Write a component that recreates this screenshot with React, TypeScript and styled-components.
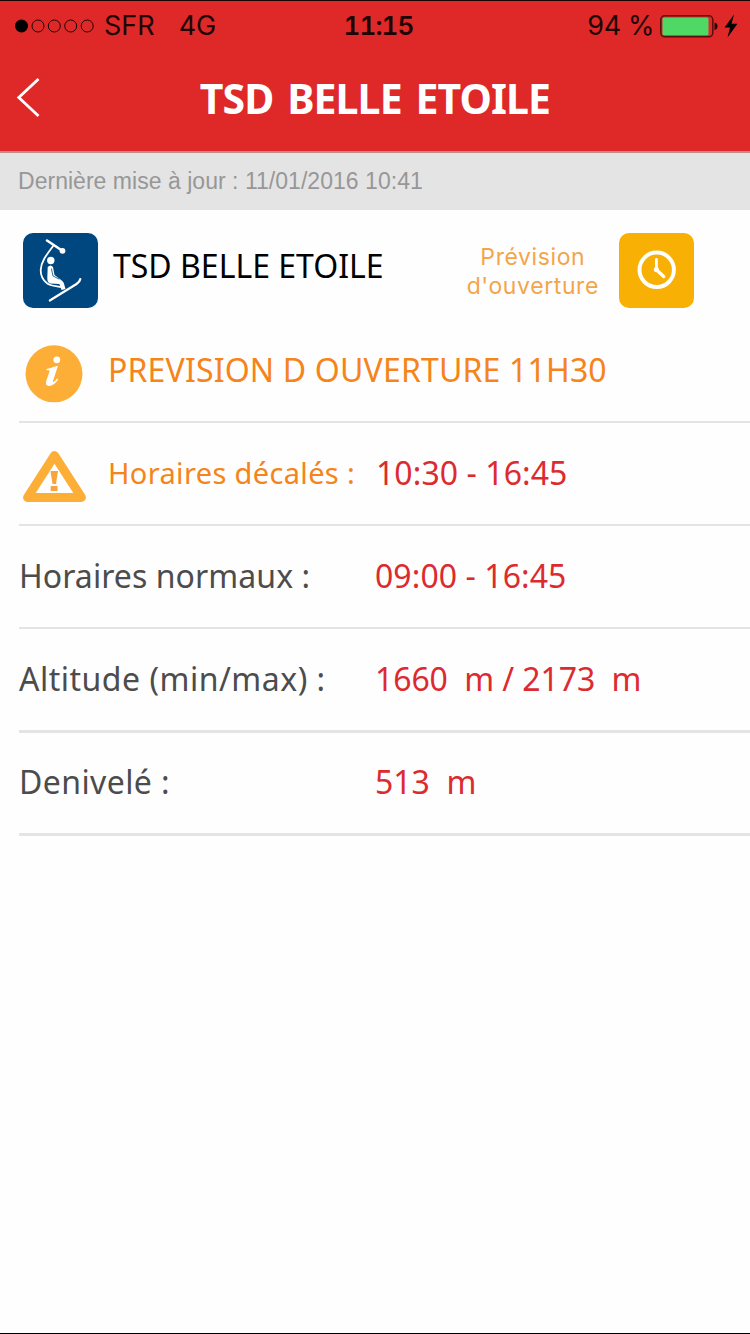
import React from "react";
import styled, { createGlobalStyle } from "styled-components";

const GlobalStyle = createGlobalStyle`
  * { box-sizing: border-box; }
  html, body { margin: 0; padding: 0; background: #fff; }
  svg { display: block; flex: none; }
`;

const frutiger = `"Noto Sans", "Open Sans", sans-serif`;
const system = `Inter, sans-serif`;

const Screen = styled.main`
  width: 750px;
  height: 1334px;
  display: flex;
  flex-direction: column;
  overflow: hidden;
  background: #fefefe;
  border-top: 1px solid #1a0303;
  border-bottom: 1px solid #000;
  font-family: ${frutiger};
`;

const Label = styled.span<{ $size: number; $spacing?: number; $color?: string; $weight?: number; $font?: string }>`
  font-family: ${(p) => p.$font ?? frutiger};
  font-size: ${(p) => p.$size}px;
  letter-spacing: ${(p) => p.$spacing ?? 0}px;
  color: ${(p) => p.$color ?? "inherit"};
  font-weight: ${(p) => p.$weight ?? 400};
  line-height: 1;
  white-space: pre;
`;

const Header = styled.header`
  height: 152px;
  flex: none;
  background: #df2929;
  border-bottom: 2px solid #bf8c8c;
`;

const StatusBar = styled.div`
  height: 48px;
  display: grid;
  grid-template-columns: 1fr auto 1fr;
  align-items: center;
  padding: 1px 10px 0 14px;
  color: #200404;
`;

const StatusGroup = styled.div<{ $end?: boolean }>`
  display: flex;
  align-items: center;
  justify-content: ${(p) => (p.$end ? "flex-end" : "flex-start")};
`;

const Signal = styled.svg`
  margin-right: 9px;
`;

const Network = styled.div`
  margin-left: 24px;
  display: flex;
`;

const Clock = styled(Label)`
  padding-left: 3px;
  font-variant-numeric: tabular-nums;
`;

const Battery = styled.svg`
  margin-left: 6px;
`;

const NavBar = styled.div`
  height: 102px;
  display: grid;
  grid-template-columns: 60px 1fr 60px;
  align-items: center;
  justify-items: center;
  padding-bottom: 5px;
  color: #fff;
`;

const BackButton = styled.button`
  width: 60px;
  height: 60px;
  padding: 3px 0 0 16px;
  margin-bottom: 3px;
  border: 0;
  background: none;
  color: inherit;
`;

const Title = styled(Label)`
  padding-top: 1px;
  word-spacing: 4px;
`;

const UpdateBar = styled.div`
  height: 57px;
  flex: none;
  display: flex;
  align-items: center;
  padding-left: 18px;
  background: #e4e4e4;
`;

const Summary = styled.section`
  height: 108px;
  flex: none;
  display: flex;
  align-items: center;
  padding: 13px 56px 0 23px;
`;

const LiftName = styled.h2`
  flex: 1;
  margin: 0 0 9px 15px;
  display: flex;
`;

const Forecast = styled.div`
  display: flex;
  flex-direction: column;
  align-items: center;
  gap: 6px;
  margin-right: 20px;
  padding-top: 3px;
`;

const Tile = styled.div<{ $color: string }>`
  width: 75px;
  height: 75px;
  border-radius: 10px;
  background: ${(p) => p.$color};
`;

const Details = styled.section`
  padding-left: 19px;
`;

const Row = styled.div<{ $height: number; $line?: number; $lift?: number }>`
  height: ${(p) => p.$height}px;
  display: flex;
  align-items: center;
  padding-bottom: ${(p) => p.$lift ?? 0}px;
  border-bottom: ${(p) => p.$line ?? 2}px solid #e4e4e4;
`;

const IconSlot = styled.div`
  width: 89px;
  flex: none;
  padding-top: 8px;
`;

const Cell = styled.div<{ $width: number }>`
  display: flex;
  flex: none;
  width: ${(p) => p.$width}px;
`;

const ORANGE = "#f5841a";
const RED = "#dc2b2f";
const GREY = "#4c4c4c";

const ChairliftIcon = () => (
  <svg width="75" height="75" viewBox="0 0 75 75" fill="none" stroke="#fff" strokeLinecap="round">
    <path d="M24 7.5 L39 17.5" strokeWidth="2.6" />
    <circle cx="39.5" cy="17.8" r="2.9" fill="#fff" stroke="none" />
    <path d="M30.5 12.5 C25 20 18 28 17.7 37 C17.6 43 20 47 23.5 49.8 C27 53 34 53 38 54" strokeWidth="1.8" />
    <circle cx="27.8" cy="27.5" r="3.7" fill="#fff" stroke="none" />
    <path d="M24.7 34 Q27.5 31 30 34 L31.5 42 L37.5 46.5 Q40 48 40.8 50 L42.5 56 L38.5 57 L36.3 51 L27 50.5 Q24.2 49.5 24.3 45 Z" fill="#fff" stroke="none" />
    <path d="M28.5 36 L30 43 L36 46" stroke="#00467f" strokeWidth=".8" />
    <path d="M26.8 67.5 L53.5 51 Q57 48.5 57.3 46" strokeWidth="2.2" />
  </svg>
);

const ClockIcon = () => (
  <svg width="75" height="75" viewBox="0 0 75 75" fill="none" stroke="#fff" strokeLinecap="round">
    <circle cx="37.7" cy="36.8" r="17.2" strokeWidth="4" />
    <path d="M37.4 26.5 V37" strokeWidth="2.8" />
    <path d="M37.6 37 L44.7 43.5" strokeWidth="3.4" />
    <circle cx="37.3" cy="36.5" r="2.5" fill="#fff" stroke="none" />
  </svg>
);

const InfoIcon = () => (
  <svg width="70" height="58" viewBox="0 0 70 58">
    <circle cx="35" cy="28.8" r="28.5" fill="#fdae36" />
    <circle cx="37.8" cy="14.8" r="3.4" fill="#fff" />
    <path
      d="M27.5 23.9 Q32 23.1 37.5 20.9 L38.9 21.1 L34 36.1 Q33.7 37.8 35.2 36.6 Q36.8 35.4 38 33.6 L39.2 34.5 Q34.7 41.1 30 41 Q25.9 40.8 27.2 36.3 L30.5 26.3 Q30.8 25.2 29.7 25.2 L27.5 25.3 Z"
      fill="#fff"
    />
  </svg>
);

const WarningIcon = () => (
  <svg width="70" height="54" viewBox="0 0 70 54">
    <path d="M35.5 5.5 L8.5 47.5 H62.5 Z" fill="none" stroke="#fdae36" strokeWidth="8.8" strokeLinejoin="round" />
    <path d="M31.5 21 H39 L37 34 H33.5 Z" fill="#f9a33c" />
    <rect x="31.7" y="36" width="6.8" height="5" fill="#f9a33c" />
  </svg>
);

const rows = [
  { label: "Horaires normaux :", spacing: 0.07, value: "09:00 - 16:45", valueSpacing: 0.07, height: 103, line: 2 },
  { label: "Altitude (min/max) :", spacing: 0.5, value: "1660  m / 2173  m", valueSpacing: -0.1, height: 104, line: 3 },
  { label: "Denivelé :", spacing: 0.4, value: "513  m", valueSpacing: 0, height: 103, line: 3 },
];

export default function App() {
  return (
    <Screen>
      <GlobalStyle />
      <Header>
        <StatusBar>
          <StatusGroup>
            <Signal width="81" height="14" viewBox="0 0 81 14" fill="none" stroke="currentColor">
              <circle cx="7.5" cy="7" r="6.5" fill="#000" stroke="none" />
              {[24, 40.3, 56.7, 73.2].map((x) => (
                <circle key={x} cx={x} cy="7" r="6" strokeWidth="1" />
              ))}
            </Signal>
            <Label $size={27} $font={system}>SFR</Label>
            <Network>
              <Label $size={27} $font={system}>4G</Label>
            </Network>
          </StatusGroup>
          <Clock $size={26} $weight={600} $font={system} $spacing={-0.9}>11:15</Clock>
          <StatusGroup $end>
            <Label $size={27} $font={system} $spacing={-0.4}>94 %</Label>
            <Battery width="80" height="26" viewBox="0 0 80 26">
              <rect x="0.8" y="2.8" width="52" height="21" rx="4" fill="none" stroke="#5a0d0d" strokeWidth="1.5" />
              <rect x="2.5" y="4.5" width="46" height="17.8" rx="1.5" fill="#4fd964" />
              <path d="M54.5 9.5 Q57.5 10 57.5 13.3 Q57.5 16.6 54.5 17 Z" fill="#200404" />
              <path d="M74 1.5 L64.5 14.5 H70 L67.5 24.5 L77.5 10.8 H71.5 Z" fill="#000" />
            </Battery>
          </StatusGroup>
        </StatusBar>
        <NavBar>
          <BackButton aria-label="Retour">
            <svg width="24" height="40" viewBox="0 0 24 40" fill="none" stroke="currentColor" strokeWidth="2.8">
              <path d="M22.5 1 L2.8 19.5 L22.5 38" />
            </svg>
          </BackButton>
          <Title $size={41} $weight={700} $spacing={-0.9}>TSD BELLE ETOILE</Title>
        </NavBar>
      </Header>
      <UpdateBar>
        <Label $size={23} $color="#979797" $spacing={0.03} $font={`"Liberation Sans", Arial, sans-serif`}>
          Dernière mise à jour : 11/01/2016 10:41
        </Label>
      </UpdateBar>
      <Summary>
        <Tile $color="#00467f">
          <ChairliftIcon />
        </Tile>
        <LiftName>
          <Label $size={32} $color="#000">TSD BELLE ETOILE</Label>
        </LiftName>
        <Forecast>
          <Label $size={23} $color="#f4a549" $font={system} $spacing={0.6}>Prévision</Label>
          <Label $size={23} $color="#f4a549" $font={system} $spacing={0.6}>d'ouverture</Label>
        </Forecast>
        <Tile $color="#f9b004">
          <ClockIcon />
        </Tile>
      </Summary>
      <Details>
        <Row $height={105}>
          <IconSlot>
            <InfoIcon />
          </IconSlot>
          <Label $size={32} $spacing={0.17} $color={ORANGE}>PREVISION D OUVERTURE 11H30</Label>
        </Row>
        <Row $height={103} $lift={2}>
          <IconSlot>
            <WarningIcon />
          </IconSlot>
          <Cell $width={268}>
            <Label $size={29} $spacing={0.35} $color={ORANGE}>Horaires décalés :</Label>
          </Cell>
          <Label $size={32} $spacing={0.07} $color={RED}>10:30 - 16:45</Label>
        </Row>
        {rows.map((row) => (
          <Row key={row.label} $height={row.height} $line={row.line} $lift={2}>
            <Cell $width={356}>
              <Label $size={32} $spacing={row.spacing} $color={GREY}>{row.label}</Label>
            </Cell>
            <Label $size={32} $spacing={row.valueSpacing} $color={RED}>{row.value}</Label>
          </Row>
        ))}
      </Details>
    </Screen>
  );
}
